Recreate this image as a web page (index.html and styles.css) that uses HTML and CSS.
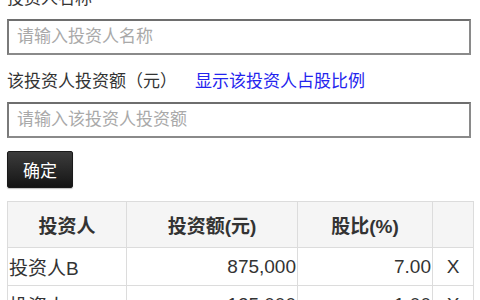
FILE: index.html
```html
<!DOCTYPE html>
<html lang="zh">
<head>
<meta charset="utf-8">
<link rel="stylesheet" href="styles.css">
</head>
<body>
<div class="page">
  <div class="label">投资人名称</div>
  <input class="field" type="text" placeholder="请输入投资人名称">
  <div class="label">该投资人投资额（元）<a class="link" href="#">显示该投资人占股比例</a></div>
  <input class="field" type="text" placeholder="请输入该投资人投资额">
  <button class="btn" type="button">确定</button>
  <table class="grid">
    <colgroup>
      <col class="c1"><col class="c2"><col class="c3"><col class="c4">
    </colgroup>
    <thead>
      <tr><th>投资人</th><th>投资额(元)</th><th>股比(%)</th><th></th></tr>
    </thead>
    <tbody>
      <tr><td>投资人B</td><td class="num">875,000</td><td class="num">7.00</td><td class="del">X</td></tr>
      <tr><td>投资人A</td><td class="num">125,000</td><td class="num">1.00</td><td class="del">X</td></tr>
    </tbody>
  </table>
</div>
</body>
</html>
```
FILE: styles.css
```css
html, body {
  margin: 0;
  padding: 0;
  background: #fff;
}
body {
  font-family: "Liberation Sans", "Noto Sans CJK SC", sans-serif;
  color: #333;
}
.page {
  margin-top: -13px;
  padding: 0 7px;
  display: flex;
  flex-direction: column;
  align-items: flex-start;
}
.label {
  font-size: 17px;
  line-height: 24px;
  height: 24px;
  margin: 15px 0 8px;
  color: #333;
  white-space: nowrap;
}
.label:first-child {
  margin-top: 0;
}
.link {
  color: #2424ee;
  text-decoration: none;
  margin-left: 18px;
}
.field {
  box-sizing: border-box;
  width: 464px;
  height: 36px;
  margin: 0;
  padding: 0 8px;
  border: 2px solid #8a8a8a;
  border-top-color: #6e6e6e;
  border-left-color: #7a7a7a;
  background: #fff;
  font-family: inherit;
  font-size: 17px;
  color: #333;
  outline: none;
}
.field::placeholder {
  color: #a9a9a9;
}
.btn {
  box-sizing: border-box;
  margin-top: 13px;
  height: 37px;
  width: 66px;
  padding: 0;
  border: 1px solid #1a1a1a;
  border-radius: 2px;
  background: linear-gradient(#3c3c3c, #151515);
  color: #fff;
  font-family: inherit;
  font-size: 17px;
  box-shadow: 0 1px 1px rgba(0,0,0,0.25);
}
.grid {
  margin-top: 13px;
  width: 466px;
  border-collapse: collapse;
  table-layout: fixed;
  font-size: 19px;
  color: #333;
}
.c1 { width: 119px; }
.c2 { width: 171px; }
.c3 { width: 135px; }
.c4 { width: 41px; }
.grid th, .grid td {
  border: 1px solid #dcdcdc;
  padding: 0 1px;
  white-space: nowrap;
  overflow: hidden;
}
.grid th {
  background: #f5f5f5;
  height: 45px;
  font-weight: bold;
  text-align: center;
}
.grid td {
  height: 37px;
  text-align: left;
}
.grid td.num {
  text-align: right;
}
.grid td.del {
  text-align: center;
}
```
